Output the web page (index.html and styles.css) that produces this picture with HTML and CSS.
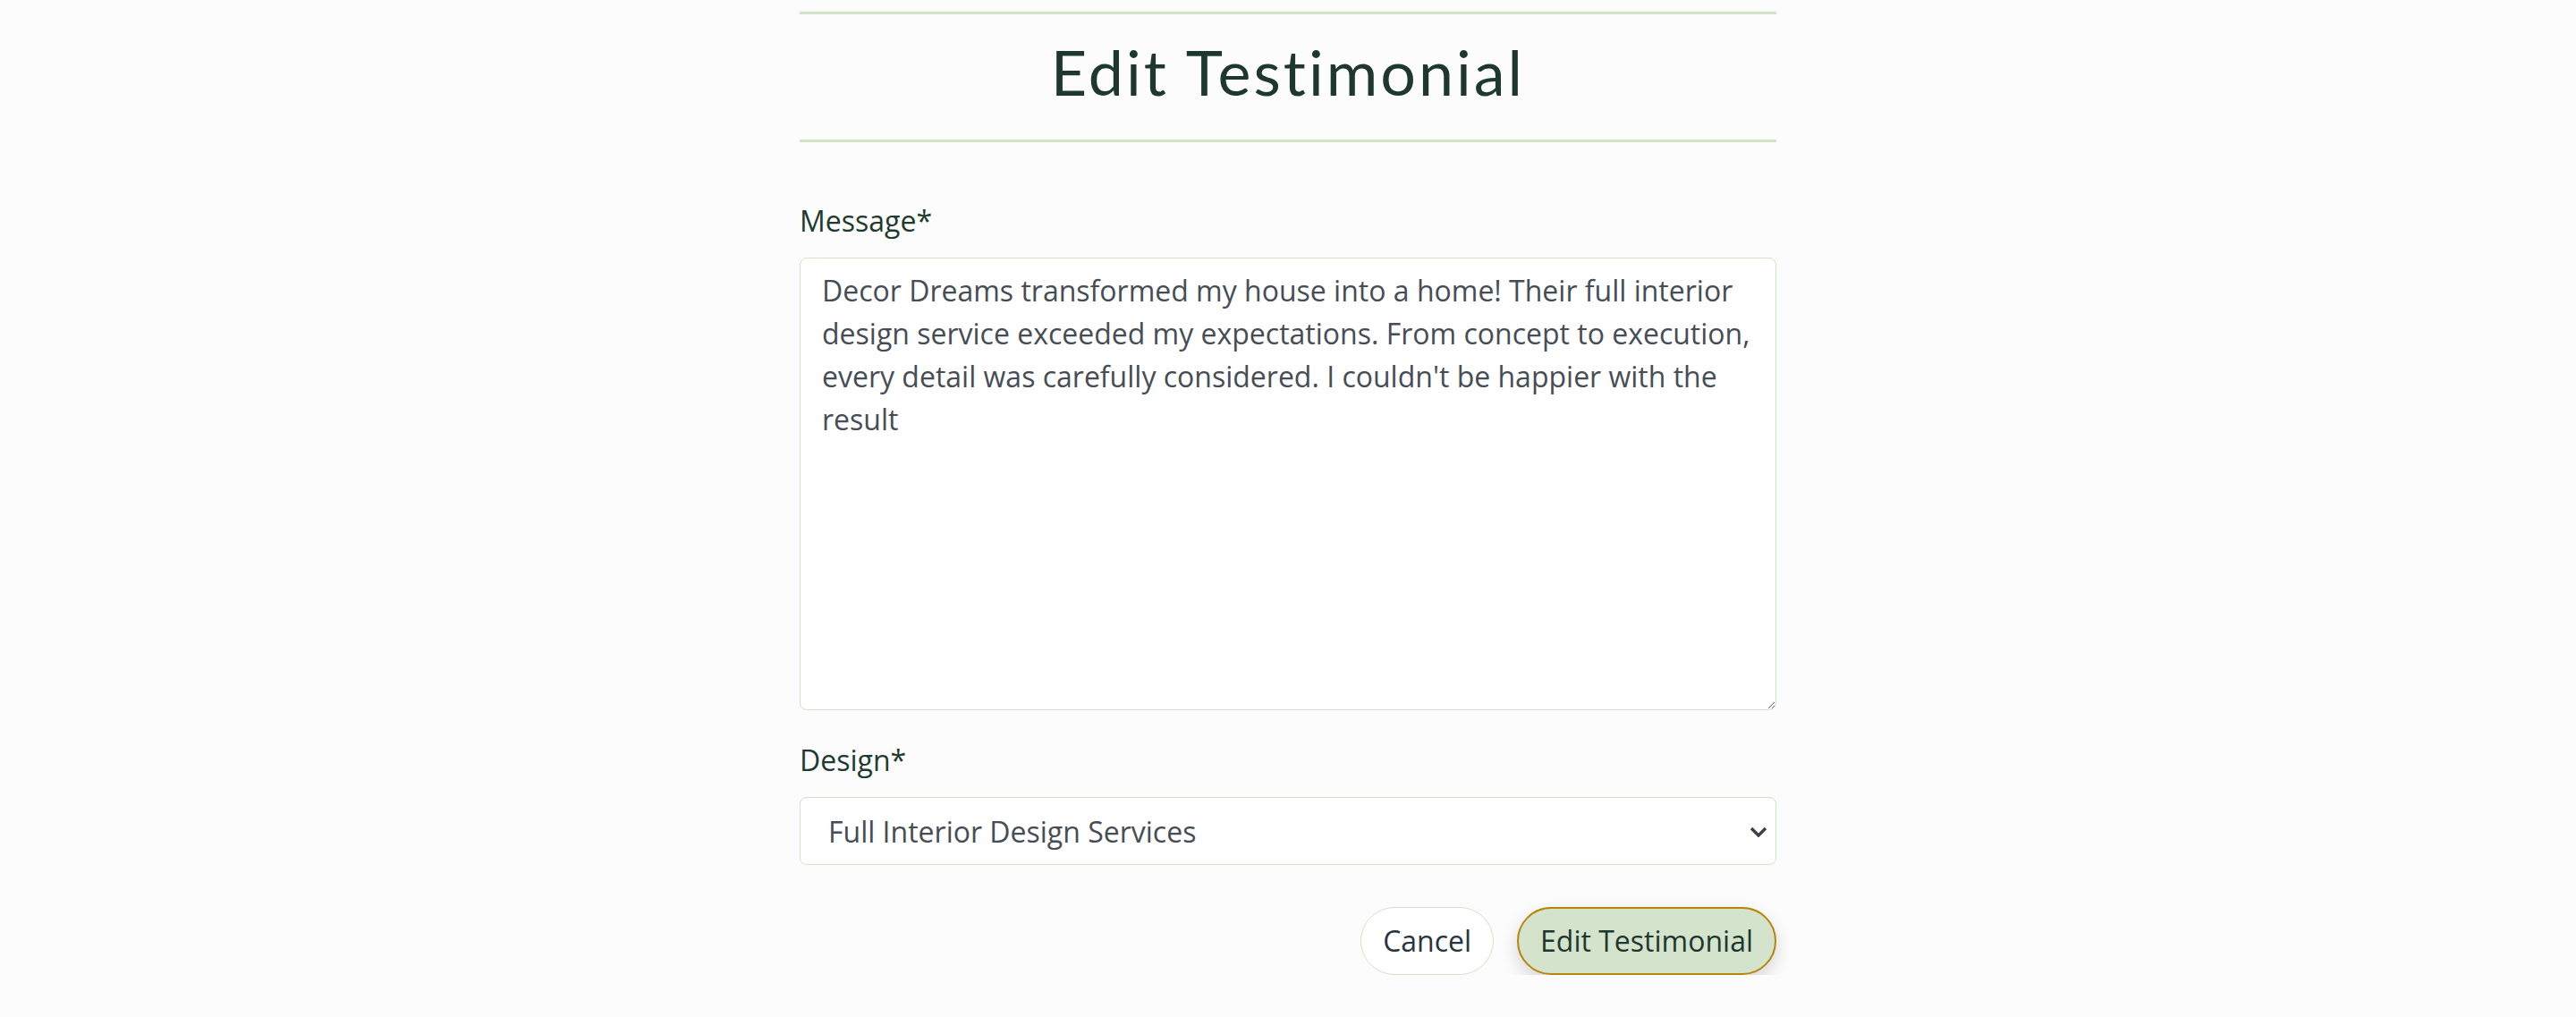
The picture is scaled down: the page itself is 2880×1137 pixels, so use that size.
FILE: index.html
```html
<!DOCTYPE html>
<html lang="en">
<head>
<meta charset="utf-8">
<title>Edit Testimonial</title>
<link rel="stylesheet" href="styles.css">
</head>
<body>
<main class="wrap">
  <header class="title-block">
    <h1 class="page-title">Edit Testimonial</h1>
  </header>
  <form class="form">
    <div class="field">
      <label class="label" for="message">Message*</label>
      <textarea class="control textarea" id="message" rows="10">Decor Dreams transformed my house into a home! Their full interior design service exceeded my expectations. From concept to execution, every detail was carefully considered. I couldn't be happier with the result</textarea>
    </div>
    <div class="field">
      <label class="label" for="design">Design*</label>
      <div class="select-wrap">
        <select class="control select" id="design">
          <option selected>Full Interior Design Services</option>
        </select>
        <svg class="chevron" width="20" height="12" viewBox="0 0 20 12" aria-hidden="true"><path d="M2 2 L10 10 L18 2" fill="none" stroke="#3b4148" stroke-width="3.4" stroke-linecap="butt" stroke-linejoin="miter"/></svg>
      </div>
    </div>
    <div class="actions">
      <button type="button" class="btn btn-cancel">Cancel</button>
      <button type="button" class="btn btn-primary">Edit Testimonial</button>
    </div>
  </form>
</main>
</body>
</html>
```

FILE: styles.css
```css
html, body {
  margin: 0;
  padding: 0;
}

body {
  background: #fcfcfc;
  font-family: "Open Sans", "Noto Sans", sans-serif;
  font-size: 32px;
  line-height: 1.5;
  color: #1f3b2f;
}

.wrap {
  width: 1092px;
  margin: 0 auto;
  padding-top: 13px;
}

.title-block {
  border-top: 3px solid #d3e3c8;
  border-bottom: 3px solid #d3e3c8;
  padding: 22px 0 34px;
}

.page-title {
  margin: 0;
  text-align: center;
  font-family: "Lato", "Noto Sans", sans-serif;
  font-weight: 400;
  font-size: 70px;
  line-height: 84px;
  color: #1e3830;
  letter-spacing: 3px;
}

.form {
  padding-top: 64px;
}

.field {
  margin-bottom: 32px;
}

.label {
  display: block;
  margin-bottom: 17px;
  color: #1f3b2f;
  font-size: 32px;
  line-height: 48px;
}

.control {
  display: block;
  box-sizing: border-box;
  width: 100%;
  margin: 0;
  font-family: "Open Sans", "Noto Sans", sans-serif;
  font-size: 32px;
  line-height: 48px;
  color: #474d55;
  background: #ffffff;
  border: 1px solid #d3e2c8;
  border-radius: 8px;
  outline: none;
}

.textarea {
  padding: 12px 24px;
  height: 506px;
  resize: vertical;
}

.select-wrap {
  position: relative;
}

.select {
  appearance: none;
  -webkit-appearance: none;
  height: 76px;
  padding: 13px 60px 11px 31px;
}

.chevron {
  position: absolute;
  right: 10px;
  top: 33px;
  pointer-events: none;
}

.actions {
  display: flex;
  justify-content: flex-end;
  gap: 26px;
  padding-top: 15px;
}

.btn {
  font-family: "Open Sans", "Noto Sans", sans-serif;
  font-size: 32px;
  line-height: 48px;
  padding: 12px 24px;
  border-radius: 40px;
  cursor: pointer;
  margin: 0;
}

.btn-cancel {
  background: #ffffff;
  border: 1px solid #d3e2c8;
  color: #2a3440;
}

.btn-primary {
  background: #d4e3cb;
  border: 2px solid #b8860b;
  color: #1e3830;
  box-shadow: 0 8px 20px rgba(0, 0, 0, 0.16);
}
```
